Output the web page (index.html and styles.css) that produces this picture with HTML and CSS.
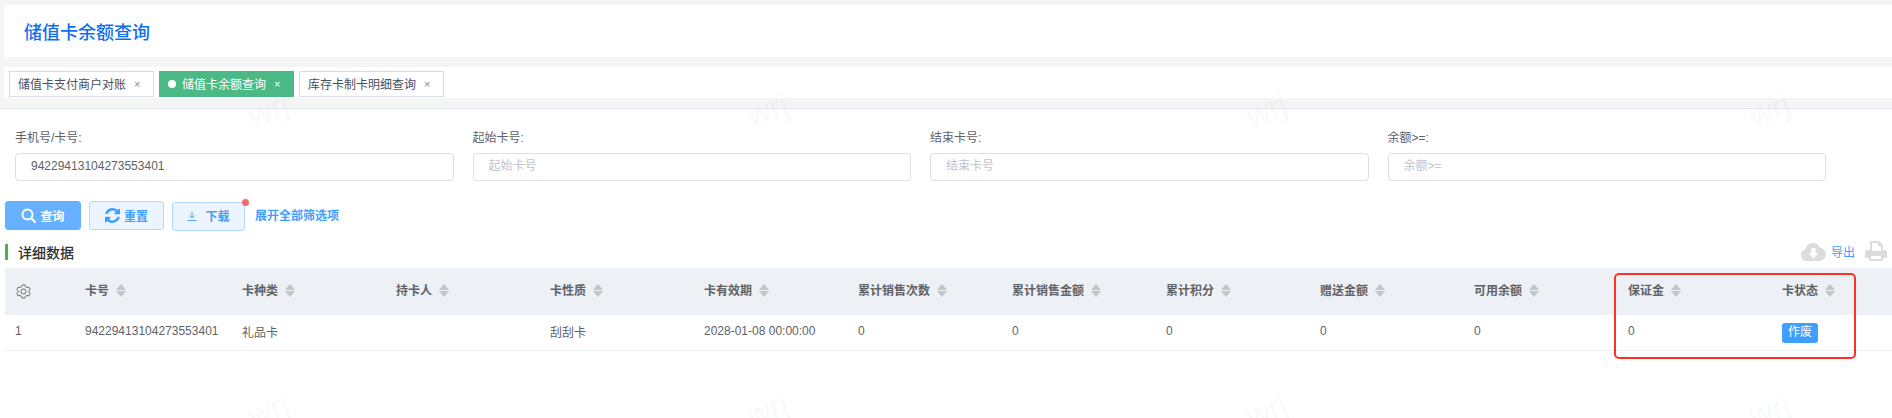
FILE: index.html
```html
<!DOCTYPE html>
<html lang="zh-CN">
<head>
<meta charset="utf-8">
<title>储值卡余额查询</title>
<link rel="stylesheet" href="styles.css">
</head>
<body>
<header class="page-head"><h1>储值卡余额查询</h1></header>
<nav class="tabs">
  <a class="tab tab-first">储值卡支付商户对账<i class="close">×</i></a>
  <a class="tab tab-active"><b class="dot"></b>储值卡余额查询<i class="close">×</i></a>
  <a class="tab tab-third">库存卡制卡明细查询<i class="close">×</i></a>
</nav>
<div class="tabs-gap"></div>
<main class="content">
  <form class="filters">
    <label class="field"><span>手机号/卡号:</span><input type="text" value="94229413104273553401"></label>
    <label class="field"><span>起始卡号:</span><input type="text" placeholder="起始卡号"></label>
    <label class="field"><span>结束卡号:</span><input type="text" placeholder="结束卡号"></label>
    <label class="field"><span>余额&gt;=:</span><input type="text" placeholder="余额&gt;="></label>
  </form>
  <div class="actions">
    <button type="button" class="btn btn-primary">
      <svg class="ico-search" viewBox="0 0 15 15"><circle cx="6.500" cy="6.500" r="5" fill="none" stroke="#fff" stroke-width="2"/><path d="M10.200 10.200L14 14" stroke="#fff" stroke-width="2.200" stroke-linecap="round"/></svg>查询
    </button>
    <button type="button" class="btn btn-plain btn-reset">
      <svg class="ico-refresh" viewBox="0 0 1536 1536"><path fill="#409eff" d="M1511 928q0 5-1 7-64 268-268 434.500T764 1536q-146 0-282.500-55T238 1324L109 1453q-19 19-45 19t-45-19-19-45V960q0-26 19-45t45-19h448q26 0 45 19t19 45-19 45L420 1142q71 66 161 102t187 36q134 0 250-65t186-179q11-17 53-117 8-23 30-23h192q13 0 22.500 9.500T1511 928zM1536 128v448q0 26-19 45t-45 19h-448q-26 0-45-19t-19-45 19-45l138-138q-148-137-349-137-134 0-250 65T332 480q-11 17-53 117-8 23-30 23H50q-13 0-22.500-9.500T18 588v-7q65-268 270-434.500T768 0q146 0 284 55.500T1297 212l130-129q19-19 45-19t45 19 19 45z"/></svg>重置
    </button>
    <button type="button" class="btn btn-plain btn-download">
      <svg class="ico-down" viewBox="0 0 10 10"><path d="M5 .5V7M2.300 4.500L5 7l2.700-2.500M.5 9.500h9" fill="none" stroke="#409eff" stroke-width=".9"/></svg>下载
      <span class="badge"></span>
    </button>
    <a class="expand">展开全部筛选项</a>
  </div>
  <div class="section-head">
    <h2>详细数据</h2>
    <div class="tools">
      <svg class="ico-cloud" viewBox="0 0 25 19"><path fill="#dcdcdc" d="M6 19a6 6 0 0 1-1.500-11.800A7.500 7.500 0 0 1 18.700 5.500 6.800 6.800 0 0 1 19 19z"/><path fill="#fff" d="M10.500 6h4v5h3l-5 5.500-5-5.500h3z"/></svg>
      <a class="export">导出</a>
      <svg class="ico-print" viewBox="0 0 22 20"><path fill="#dcdcdc" d="M5 0h9l4 4v5h2a2 2 0 0 1 2 2v6h-4v3H4v-3H0v-6a2 2 0 0 1 2-2h3z"/><path fill="#fff" d="M7 2h6v3h3v5H7zM6 15h10v3H6z"/></svg>
    </div>
  </div>
  <table class="grid">
    <colgroup>
      <col class="c-index"><col class="c-card"><col class="c-std"><col class="c-std"><col class="c-std"><col class="c-std"><col class="c-std"><col class="c-std"><col class="c-std"><col class="c-std"><col class="c-std"><col class="c-std"><col class="c-last">
    </colgroup>
    <thead>
      <tr>
        <th><svg class="ico-gear" viewBox="0 0 16 16"><path fill="none" stroke="#606266" stroke-width="1" d="M6.500 1h3l.6 1.900 1.700.9 1.900-.5 1.400 2.500-1.300 1.400v1.600l1.300 1.400-1.400 2.500-1.900-.5-1.700.9-.6 1.900h-3l-.6-1.900-1.700-.9-1.900.5L.9 10.200l1.300-1.400V7.200L.9 5.800l1.400-2.500 1.900.5 1.700-.9z"/><circle cx="8" cy="8" r="2.700" fill="none" stroke="#606266"/></svg></th>
        <th>卡号<span class="sort"></span></th>
        <th>卡种类<span class="sort"></span></th>
        <th>持卡人<span class="sort"></span></th>
        <th>卡性质<span class="sort"></span></th>
        <th>卡有效期<span class="sort"></span></th>
        <th>累计销售次数<span class="sort"></span></th>
        <th>累计销售金额<span class="sort"></span></th>
        <th>累计积分<span class="sort"></span></th>
        <th>赠送金额<span class="sort"></span></th>
        <th>可用余额<span class="sort"></span></th>
        <th>保证金<span class="sort"></span></th>
        <th>卡状态<span class="sort"></span></th>
      </tr>
    </thead>
    <tbody>
      <tr>
        <td>1</td>
        <td>94229413104273553401</td>
        <td>礼品卡</td>
        <td></td>
        <td>刮刮卡</td>
        <td>2028-01-08 00:00:00</td>
        <td>0</td>
        <td>0</td>
        <td>0</td>
        <td>0</td>
        <td>0</td>
        <td>0</td>
        <td class="status"><span class="tag">作废</span></td>
      </tr>
    </tbody>
  </table>
</main>
<div class="highlight"></div>
<span class="wm wm-a1">wrj</span><span class="wm wm-a2">wrj</span><span class="wm wm-a3">wrj</span><span class="wm wm-a4">wrj</span>
<span class="wm wm-b1">wrj</span><span class="wm wm-b2">wrj</span><span class="wm wm-b3">wrj</span><span class="wm wm-b4">wrj</span>
</body>
</html>
```

FILE: styles.css
```css
* { box-sizing: border-box; }
html, body { height: 100%; }
body {
  margin: 0;
  background: #f5f5f5;
  font-family: "Liberation Sans", "Noto Sans CJK SC", sans-serif;
  font-size: 12px;
  color: #606266;
  position: relative;
  overflow: hidden;
  padding-top: 5px;
}
.page-head {
  margin-left: 4px;
  height: 52px;
  background: #fff;
  padding-left: 20px;
  padding-bottom: 1px;
  display: flex;
  align-items: center;
}
.page-head h1 {
  margin: 0;
  font-size: 18px;
  font-weight: 500;
  color: #0f6fec;
}
.tabs {
  margin: 10px 0 0 4px;
  height: 31px;
  background: #fff;
  padding: 4px 0 0 5px;
  display: flex;
  gap: 5px;
  align-items: flex-start;
}
.tab {
  height: 26px;
  border: 1px solid #d8dce5;
  background: #fff;
  color: #495060;
  display: flex;
  align-items: center;
  padding-left: 8px;
  padding-bottom: 2px;
}
.tab-first { width: 145px; }
.tab-active { width: 135px; background: #4ab985; border-color: #4ab985; color: #fff; }
.tab-third { width: 145px; }
.dot {
  width: 8px;
  height: 8px;
  border-radius: 50%;
  background: #fff;
  margin: 2px 6px 0 0;
}
.close {
  font-style: normal;
  font-size: 11px;
  color: #888;
  margin: 2px 0 0 8px;
}
.tab-active .close { color: #fff; }
.tabs-gap {
  height: 11px;
  border-bottom: 1px solid #e6e8f0;
}
.content {
  background: #fff;
  height: 310px;
}
.filters {
  display: grid;
  grid-template-columns: repeat(4, 438.500px);
  column-gap: 19px;
  padding: 21px 0 0 15px;
}
.field { display: flex; flex-direction: column; }
.field span {
  height: 16px;
  line-height: 16px;
  margin-bottom: 7px;
  color: #606266;
}
.field input {
  height: 28px;
  border: 1px solid #dcdfe6;
  border-radius: 4px;
  padding: 0 15px 2px;
  font: inherit;
  color: #606266;
  outline: none;
  background: #fff;
}
.field input::placeholder { color: #c0c4cc; }
.actions {
  display: flex;
  align-items: flex-start;
  margin-top: 20px;
  padding-left: 5px;
}
.btn {
  position: relative;
  height: 29px;
  border-radius: 3px;
  font: inherit;
  font-weight: 700;
  display: flex;
  align-items: center;
  justify-content: center;
  padding: 0;
}
.btn-primary {
  width: 76px;
  background: #66b1ff;
  border: 1px solid #66b1ff;
  color: #fff;
  margin-right: 8px;
}
.btn-plain {
  background: #ecf5ff;
  border: 1px solid #b3d8ff;
  color: #409eff;
}
.btn-reset { width: 75px; margin-right: 8px; }
.btn-download { width: 73px; margin-top: 1px; margin-right: 10px; padding-bottom: 2px; }
.ico-search { width: 15px; height: 15px; margin-right: 4px; }
.ico-refresh { width: 15px; height: 15px; margin-right: 4px; }
.ico-down { width: 10px; height: 10px; margin-right: 8px; }
.badge {
  position: absolute;
  top: -4px;
  right: -5px;
  width: 7px;
  height: 7px;
  border-radius: 50%;
  background: #f56c6c;
}
.expand {
  color: #409eff;
  font-weight: 700;
  line-height: 31px;
}
.section-head {
  margin: 12px 0 0 5px;
  height: 16px;
  border-left: 3px solid #4caf50;
  padding-left: 10px;
  display: flex;
  align-items: center;
  justify-content: space-between;
}
.section-head h2 {
  margin: 0;
  font-size: 14px;
  font-weight: 500;
  color: #303133;
}
.tools {
  display: flex;
  align-items: center;
  padding: 0 5px 2px 0;
}
.ico-cloud { width: 25px; height: 19px; margin-right: 5px; }
.ico-print { width: 22px; height: 20px; margin-left: 10px; }
.export { color: #409eff; }
.grid {
  margin: 8px 0 0 5px;
  width: 1887px;
  table-layout: fixed;
  border-collapse: collapse;
}
.c-index { width: 70px; }
.c-card { width: 157px; }
.c-std { width: 154px; }
.c-last { width: 120px; }
.grid th {
  height: 47px;
  background: #edf0f5;
  text-align: left;
  padding: 0 10px 4px;
  font-weight: 700;
  color: #606266;
  white-space: nowrap;
}
.grid td {
  height: 35px;
  padding: 0 10px 2px;
  color: #606266;
  border-bottom: 1px solid #ebeef5;
  white-space: nowrap;
}
.grid td.status { padding-bottom: 0; }
.ico-gear { display: block; width: 15px; height: 15px; margin: 3px 0 0 1px; }
.sort {
  display: inline-block;
  position: relative;
  width: 10px;
  height: 13px;
  margin-left: 7px;
  vertical-align: -2px;
}
.sort::before, .sort::after {
  content: "";
  position: absolute;
  left: 0;
  border-left: 5px solid transparent;
  border-right: 5px solid transparent;
}
.sort::before { top: 0; border-bottom: 6px solid #c0c4cc; }
.sort::after { bottom: 0; border-top: 6px solid #c0c4cc; }
.tag {
  display: inline-block;
  width: 36px;
  height: 20px;
  line-height: 18px;
  text-align: center;
  background: #409eff;
  color: #fff;
  border-radius: 3px;
  vertical-align: middle;
  margin-top: 2px;
}
.highlight {
  position: absolute;
  left: 1614px;
  top: 273px;
  width: 242px;
  height: 86px;
  border: 2px solid #ff3126;
  border-radius: 5px;
}
.wm {
  position: absolute;
  font-size: 32px;
  line-height: 32px;
  color: rgba(60, 70, 100, 0.055);
  transform: rotate(-20deg);
  pointer-events: none;
}
.wm-a1 { left: 248px; top: 94px; }
.wm-a2 { left: 747px; top: 94px; }
.wm-a3 { left: 1246px; top: 94px; }
.wm-a4 { left: 1749px; top: 94px; }
.wm-b1 { left: 248px; top: 394px; }
.wm-b2 { left: 747px; top: 394px; }
.wm-b3 { left: 1246px; top: 394px; }
.wm-b4 { left: 1749px; top: 394px; }
```
